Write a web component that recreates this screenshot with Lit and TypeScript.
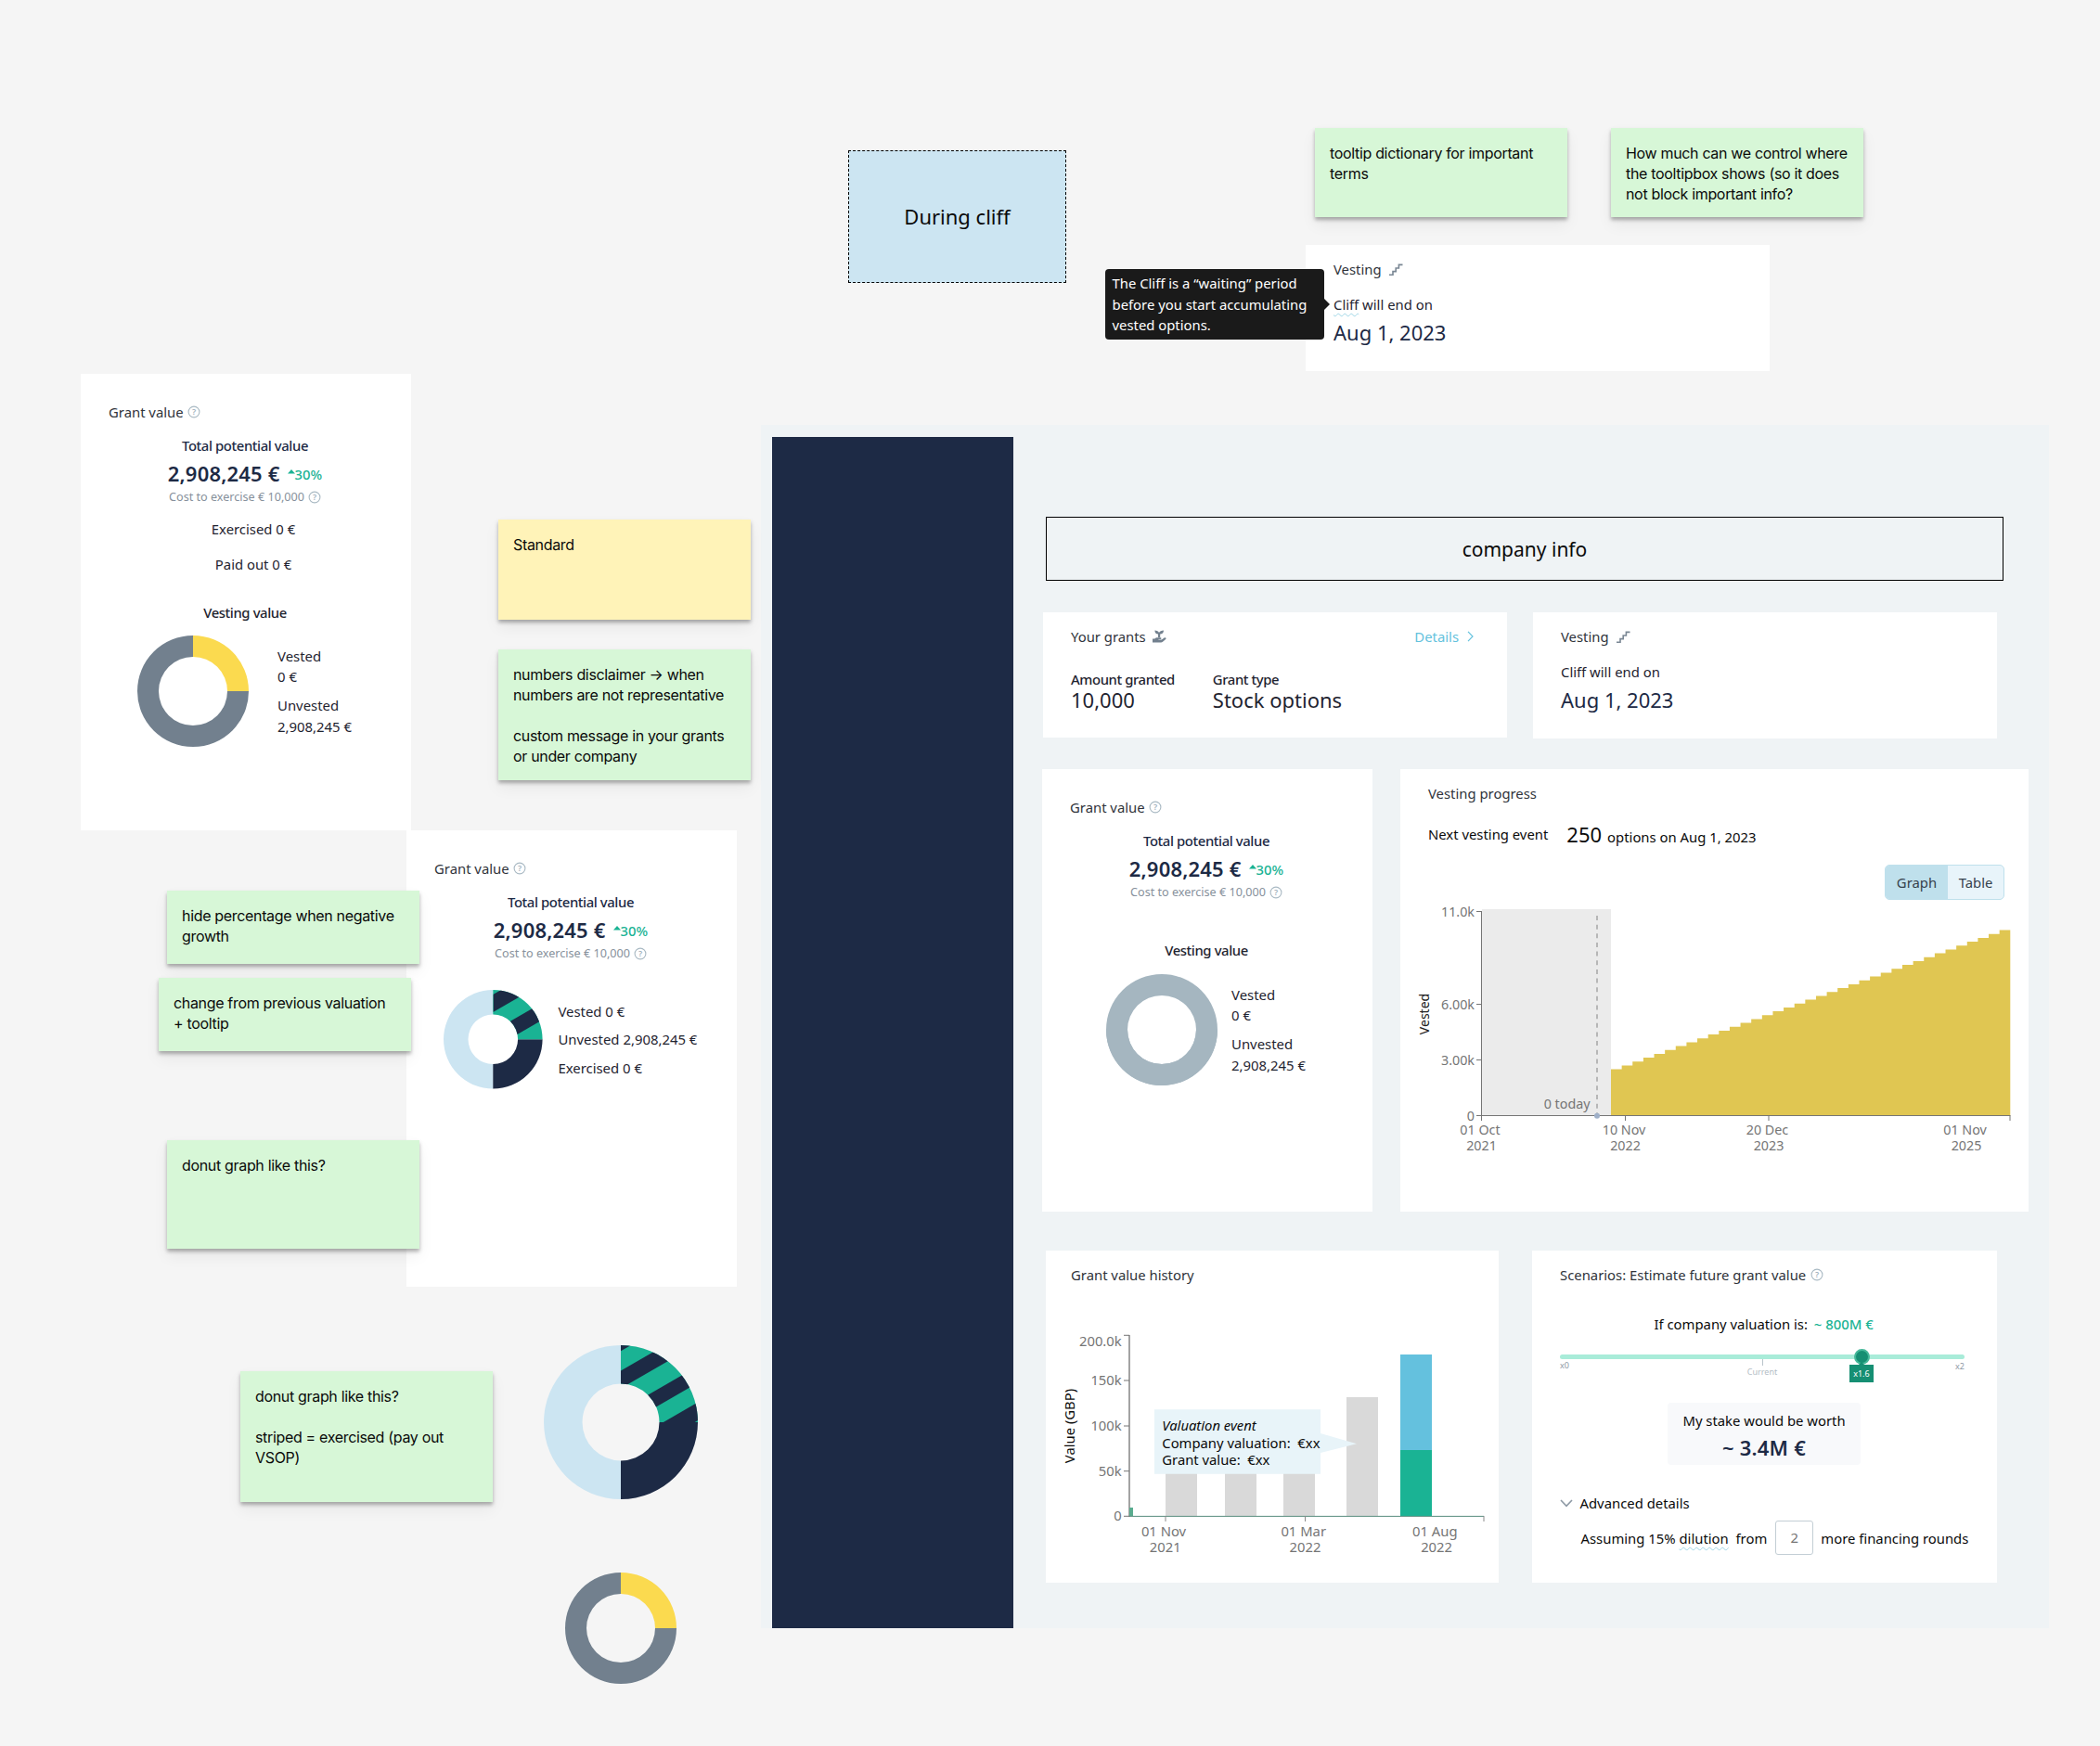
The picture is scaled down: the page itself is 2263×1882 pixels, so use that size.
import { css, html, LitElement, nothing, svg } from "lit";
import { customElement, property } from "lit/decorators.js";
import { styleMap } from "lit/directives/style-map.js";

const text = css`
  * {
    box-sizing: border-box;
  }

  .line {
    font-size: 14.85px;
    line-height: 20px;
    white-space: pre;
  }

  .big {
    font-size: 22px;
    line-height: 30px;
    white-space: pre;
  }

  .medium {
    font-weight: 500;
    letter-spacing: -0.4px;
  }

  .term {
    text-decoration: underline wavy #9fd6e6 0.6px;
    text-underline-offset: 3px;
  }

  svg {
    display: block;
    flex: none;
    overflow: visible;
  }
`;

@customElement("help-icon")
export class HelpIcon extends LitElement {
  render() {
    return html`
      <svg width="14" height="14" viewBox="0 0 14 14">
        <circle cx="7" cy="7" r="5.9" fill="none" stroke="#a9b9c3" stroke-width="1.1" />
        <text x="7" y="10.3" text-anchor="middle">?</text>
      </svg>
    `;
  }

  static styles = css`
    :host {
      display: block;
      flex: none;
      height: 14px;
      letter-spacing: 0;
      white-space: normal;
    }

    svg {
      display: block;
    }

    text {
      font: 600 9px "Noto Sans", sans-serif;
      fill: #9fb1bc;
    }
  `;
}

@customElement("sticky-note")
export class StickyNote extends LitElement {
  @property() text = "";

  render() {
    return html`<p>${this.text}</p>`;
  }

  static styles = css`
    :host {
      display: block;
      box-sizing: border-box;
      width: 272px;
      padding: 16px;
      background: #d7f7d7;
      box-shadow: 0 3px 4px rgba(0, 0, 0, 0.3), 0 8px 16px rgba(0, 0, 0, 0.06);
    }

    :host([yellow]) {
      background: #fff3b8;
    }

    p {
      margin: 0;
      color: #0a0a0a;
      font-family: Inter, sans-serif;
      font-size: 16px;
      line-height: 22px;
      letter-spacing: -0.33px;
      white-space: pre;
    }
  `;
}

type Slice = { from: number; to: number; color: string };

@customElement("donut-chart")
export class DonutChart extends LitElement {
  @property({ type: Number }) radius = 60;
  @property({ type: Number }) hole = 37;
  @property({ attribute: false }) slices: Slice[] = [];
  // [top, bottom] of every diagonal band over the first quarter
  @property({ attribute: false }) stripes: number[][] = [];

  private slicePath({ from, to }: Slice) {
    const r = this.radius;
    const h = this.hole;
    const at = (turn: number, d: number) => {
      const a = turn * 2 * Math.PI;
      return `${(d * Math.sin(a)).toFixed(3)} ${(-d * Math.cos(a)).toFixed(3)}`;
    };
    const large = to - from > 0.5 ? 1 : 0;
    return `M${at(from, r)}A${r} ${r} 0 ${large} 1 ${at(to, r)}L${at(to, h)}A${h} ${h} 0 ${large} 0 ${at(from, h)}Z`;
  }

  render() {
    const r = this.radius;
    const drop = r * Math.tan(Math.PI / 6);
    return html`
      <svg width=${r * 2} height=${r * 2} viewBox="${-r} ${-r} ${r * 2} ${r * 2}">
        <clipPath id="quarter"><path d=${this.slicePath({ from: 0, to: 0.25, color: "" })} /></clipPath>
        ${this.slices.map((s) => svg`<path d=${this.slicePath(s)} fill=${s.color} />`)}
        <g clip-path="url(#quarter)">
          ${this.stripes.map(
            ([a, b]) => svg`<polygon points="0,${a} ${r},${a - drop} ${r},${b - drop} 0,${b}" fill="#1d2a45" />`
          )}
        </g>
      </svg>
    `;
  }

  static styles = css`
    :host {
      display: block;
      flex: none;
    }

    svg {
      display: block;
    }
  `;
}

const quarterDonut: Slice[] = [
  { from: 0.25, to: 1, color: "#72808e" },
  { from: 0, to: 0.25, color: "#fbda4f" },
];
const plainDonut: Slice[] = [
  { from: 0, to: 0.5, color: "#a5b6c0" },
  { from: 0.5, to: 1, color: "#a5b6c0" },
  { from: 0.25, to: 0.75, color: "#a5b6c0" },
];
const stripedDonut: Slice[] = [
  { from: 0.5, to: 1, color: "#cce5f2" },
  { from: 0.25, to: 0.5, color: "#1d2a45" },
  { from: 0, to: 0.25, color: "#1ab394" },
];

@customElement("grant-value-card")
export class GrantValueCard extends LitElement {
  @property() variant: "payout" | "striped" | "vesting" = "vesting";

  private renderPairs() {
    return html`
      <div class="legend pairs">
        <div>Vested<br />0 €</div>
        <div>Unvested<br />2,908,245 €</div>
      </div>
    `;
  }

  private renderBody() {
    if (this.variant === "striped") {
      return html`
        <div class="chart striped">
          <donut-chart
            .radius=${53.3}
            .hole=${26.8}
            .slices=${stripedDonut}
            .stripes=${[[-48.3, -29.3], [-8.9, 9.8]]}
          ></donut-chart>
          <div class="legend rows">
            <div>Vested 0 €</div>
            <div>Unvested 2,908,245 €</div>
            <div>Exercised 0 €</div>
          </div>
        </div>
      `;
    }
    const payout = this.variant === "payout";
    return html`
      ${payout
        ? html`
            <div class="line extra exercised">Exercised 0 €</div>
            <div class="line extra paid">Paid out 0 €</div>
          `
        : nothing}
      <div class="line medium center heading ${this.variant}">Vesting value</div>
      <div class="chart ${this.variant}">
        <donut-chart .slices=${payout ? quarterDonut : plainDonut}></donut-chart>
        ${this.renderPairs()}
      </div>
    `;
  }

  render() {
    return html`
      <div class="title line">Grant value<help-icon></help-icon></div>
      <div class="line medium center total">Total potential value</div>
      <div class="amount">
        <span class="big">2,908,245 €</span>
        <svg width="8" height="5" viewBox="0 0 8 5"><path d="M0 4.6 4 0l4 4.6z" fill="#1ab394" /></svg>
        <span class="line growth">30%</span>
      </div>
      <div class="cost">Cost to exercise € 10,000<help-icon></help-icon></div>
      ${this.renderBody()}
    `;
  }

  static styles = [
    text,
    css`
      :host {
        display: block;
        box-sizing: border-box;
        width: 356px;
        padding-top: 31px;
        background: #fff;
        color: #1f2430;
        font-family: "Noto Sans", sans-serif;
      }

      .title {
        display: flex;
        align-items: center;
        gap: 4.5px;
        margin-left: 30px;
        color: #30343b;
      }

      .center {
        padding-right: 2px;
        text-align: center;
      }

      .total {
        margin-top: 16px;
        color: #1d2a45;
      }

      .amount {
        display: flex;
        justify-content: center;
        margin-top: 5px;
        padding-right: 2px;
        color: #1d2a45;
      }

      .amount .big {
        font-weight: 600;
        letter-spacing: 0.2px;
      }

      .amount svg {
        margin: 11px 0 0 8px;
      }

      .growth {
        margin-top: 6px;
        color: #1ab394;
        font-weight: 500;
      }

      .cost {
        display: flex;
        align-items: center;
        justify-content: center;
        gap: 4px;
        margin-top: 2px;
        padding-right: 2px;
        color: #87919c;
        font-size: 12.6px;
        line-height: 18px;
      }

      .extra {
        padding-left: 16px;
        text-align: center;
      }

      .exercised {
        margin-top: 15px;
      }

      .paid {
        margin-top: 18px;
      }

      .heading.payout {
        margin-top: 32px;
      }

      .heading.vesting {
        margin-top: 43px;
      }

      .chart {
        display: flex;
        align-items: center;
        margin-top: 15px;
      }

      .chart.payout {
        gap: 31px;
        margin-left: 61px;
      }

      .chart.vesting {
        gap: 15px;
        margin: 16px 0 0 69px;
      }

      .chart.striped {
        gap: 16.5px;
        margin: 30px 0 0 40.3px;
      }

      .legend {
        font-size: 14.9px;
        white-space: nowrap;
      }

      .pairs {
        display: grid;
        gap: 8px;
        line-height: 22.7px;
      }

      .rows {
        line-height: 30.5px;
      }
    `,
  ];
}

@customElement("vesting-card")
export class VestingCard extends LitElement {
  @property({ type: Boolean }) marked = false;

  render() {
    return html`
      <div class="title line">
        Vesting
        <svg width="15" height="13" viewBox="0 0 15 13">
          <path d="M0 12.2H4V8.6H7.2V5H10.4V1.4H14.5" fill="none" stroke="#7a8794" stroke-width="1.6" />
        </svg>
      </div>
      <div class="line cliff"><span class=${this.marked ? "term" : ""}>Cliff</span> will end on</div>
      <div class="big date">Aug 1, 2023</div>
    `;
  }

  static styles = [
    text,
    css`
      :host {
        display: block;
        box-sizing: border-box;
        width: 500px;
        height: 136px;
        padding: 16px 30px;
        background: #fff;
        color: #1f2430;
        font-family: "Noto Sans", sans-serif;
      }

      .title {
        display: flex;
        align-items: center;
        gap: 8px;
        color: #30343b;
        white-space: normal;
      }

      .cliff {
        margin-top: 18px;
      }

      .date {
        margin-top: 5px;
        color: #1d2a45;
      }
    `,
  ];
}

@customElement("vesting-progress")
export class VestingProgress extends LitElement {
  // The cliff releases 2500 options, then 36 monthly events lead to 10000
  private renderSteps() {
    const step = (657.3 - 227) / 37;
    let d = "M227 373.6";
    for (let i = 0; i < 37; i++) {
      const y = 373.6 - (2500 + (i * 7500) / 36) * 0.02;
      d += `V${y.toFixed(2)}H${(227 + (i + 1) * step).toFixed(2)}`;
    }
    return svg`<path d="${d}V373.6Z" fill="#e0c652" />`;
  }

  render() {
    const yTicks = [[153.5, "11.0k"], [253.5, "6.00k"], [313.5, "3.00k"], [373.5, "0"]] as const;
    const xTicks = [
      [87.5, 86, "01 Oct", "2021"],
      [242.5, 241, "10 Nov", "2022"],
      [397, 395.5, "20 Dec", "2023"],
      [657, 608.5, "01 Nov", "2025"],
    ] as const;
    return html`
      <div class="line title">Vesting progress</div>
      <div class="next">
        <span class="line">Next vesting event</span>
        <span class="big">250</span>
        <span class="line options">options on Aug 1, 2023</span>
      </div>
      <div class="toggle">
        <div class="line on">Graph</div>
        <div class="line">Table</div>
      </div>
      <svg width="677" height="337" viewBox="0 140 677 337">
        <rect x="88" y="151" width="139" height="222.5" fill="#ebebeb" />
        ${this.renderSteps()}
        <path class="dash" d="M212 158V371" />
        <path class="axis" d="M87.5 153V379M87.5 373.5H657.5" />
        ${yTicks.map(([y, label]) => svg`
          <path class="axis" d="M82 ${y}h5.5" />
          <text x="80" y=${y + 5.3} text-anchor="end">${label}</text>
        `)}
        ${xTicks.map(([x, center, day, year]) => svg`
          <path class="axis" d="M${x} 373.5v5.5" />
          <text x=${center} y="394.3" text-anchor="middle">${day}</text>
          <text x=${center + 1.5} y="411.3" text-anchor="middle">${year}</text>
        `)}
        <circle cx="212" cy="373.8" r="3" fill="#9fb0c9" />
        <text x="204.5" y="366" text-anchor="end">0 today</text>
        <text class="name" transform="translate(30.5 264) rotate(-90)" text-anchor="middle">Vested</text>
      </svg>
    `;
  }

  static styles = [
    text,
    css`
      :host {
        display: block;
        box-sizing: border-box;
        width: 677px;
        height: 477px;
        padding-top: 16px;
        background: #fff;
        font-family: "Noto Sans", sans-serif;
      }

      .title {
        margin-left: 30px;
        color: #30343b;
      }

      .next {
        display: flex;
        height: 30px;
        margin: 19px 0 0 30px;
        color: #0a0a0a;
      }

      .next .line {
        margin-top: 5px;
      }

      .next .big {
        margin-left: 20px;
      }

      .next .options {
        margin: 8px 0 0 6px;
      }

      .toggle {
        display: flex;
        width: 129px;
        height: 38px;
        margin: 18px 0 0 522px;
        overflow: hidden;
        border: 1px solid #bfe0ec;
        border-radius: 5px;
        background: #e8f4fa;
        color: #36424d;
      }

      .toggle .line {
        flex: 1;
        padding-top: 7.5px;
        text-align: center;
      }

      .toggle .on {
        flex: 0 0 67px;
        background: #bfe0ec;
      }

      svg {
        margin-top: -1px;
      }

      .axis {
        fill: none;
        stroke: #757575;
      }

      .dash {
        stroke: #9a9a9a;
        stroke-width: 1.3;
        stroke-dasharray: 5 4.65;
      }

      text {
        fill: #757575;
        font-size: 14.3px;
      }

      .name {
        fill: #222;
        font-size: 14px;
      }
    `,
  ];
}

@customElement("value-history")
export class ValueHistory extends LitElement {
  render() {
    const yTicks = [
      [91.3, 103, "200.0k"],
      [140, 145.3, "150k"],
      [189, 194, "100k"],
      [237.7, 242.7, "50k"],
      [286.3, 291.3, "0"],
    ] as const;
    const xTicks = [
      [129, 127, "01 Nov", "2021"],
      [279.5, 277.7, "01 Mar", "2022"],
      [472, 419.3, "01 Aug", "2022"],
    ] as const;
    const bars = [
      [129, 230],
      [193, 220],
      [256, 210],
      [324, 158],
    ];
    return html`
      <div class="line title">Grant value history</div>
      <svg width="488" height="322" viewBox="0 36 488 322">
        ${bars.map(([x, y]) => svg`<rect x=${x} y=${y} width="34" height=${286 - y} fill="#d9d9d9" />`)}
        <rect x="382" y="112" width="34" height="103" fill="#64c1de" />
        <rect x="382" y="215" width="34" height="71" fill="#1ab394" />
        <path d="M90 91V287" stroke="#a3a3a3" stroke-width="2" />
        <rect x="90" y="277" width="4" height="9" fill="#5aac8f" />
        <path d="M90 286.4H472" stroke="#588c7e" />
        ${yTicks.map(([y, base, label]) => svg`
          <path d="M84 ${y}h6" stroke="#757575" />
          <text x="81.7" y=${base} text-anchor="end">${label}</text>
        `)}
        ${xTicks.map(([x, center, day, year]) => svg`
          <path d="M${x} 286v6" stroke="#8a8a8a" />
          <text x=${center} y="307.7" text-anchor="middle">${day}</text>
          <text x=${center + 1.8} y="325.3" text-anchor="middle">${year}</text>
        `)}
        <path d="M117 171.3H296V197L335 208.3L296 218V240.7H117Z" fill="#e8f4f9" />
        <text class="dark italic" x="125.3" y="194">Valuation event</text>
        <text class="dark" x="125.3" y="213.2">Company valuation:  €xx</text>
        <text class="dark" x="125.3" y="231.2">Grant value:  €xx</text>
        <text class="dark" transform="translate(30.5 189) rotate(-90)" text-anchor="middle">Value (GBP)</text>
      </svg>
    `;
  }

  static styles = [
    text,
    css`
      :host {
        display: block;
        box-sizing: border-box;
        width: 488px;
        height: 358px;
        padding-top: 16px;
        background: #fff;
        font-family: "Noto Sans", sans-serif;
      }

      .title {
        margin-left: 27px;
        color: #30343b;
      }

      text {
        fill: #757575;
        font-size: 14.8px;
        white-space: pre;
      }

      .dark {
        fill: #0a0a0a;
      }

      .italic {
        font-style: italic;
      }
    `,
  ];
}

@customElement("value-scenarios")
export class ValueScenarios extends LitElement {
  @property({ type: Number }) factor = 1.6;

  render() {
    return html`
      <div class="line title">Scenarios: Estimate future grant value<help-icon></help-icon></div>
      <div class="line valuation">If company valuation is:<span class="green">~ 800M €</span></div>
      <div class="slider">
        <div class="thumb" style=${styleMap({ left: `${(this.factor / 2) * 93.3}%` })}>
          <div class="badge">x${this.factor}</div>
        </div>
      </div>
      <div class="scale"><span>x0</span><span class="current">Current</span><span class="end">x2</span></div>
      <div class="stake">
        <div class="line">My stake would be worth</div>
        <div class="big">~ 3.4M €</div>
      </div>
      <div class="line advanced">
        <svg width="14" height="9" viewBox="0 0 14 9">
          <path d="M1 1l6 6.3L13 1" fill="none" stroke="#8d99a5" stroke-width="1.6" />
        </svg>
        Advanced details
      </div>
      <div class="line rounds">
        <span>Assuming 15% <span class="term">dilution</span>  from</span>
        <span class="count">2</span>
        <span>more financing rounds</span>
      </div>
    `;
  }

  static styles = [
    text,
    css`
      :host {
        display: block;
        box-sizing: border-box;
        width: 501px;
        height: 358px;
        padding: 16px 30px;
        background: #fff;
        color: #0a0a0a;
        font-family: "Noto Sans", sans-serif;
      }

      .title {
        display: flex;
        align-items: center;
        gap: 4.5px;
        color: #30343b;
      }

      .valuation {
        display: flex;
        gap: 7px;
        margin: 33px 0 0 101.5px;
      }

      .green {
        color: #1ab394;
        font-weight: 500;
      }

      .slider {
        position: relative;
        width: 436px;
        height: 5px;
        margin-top: 23px;
        border-radius: 3px;
        background: #a9ecd9;
      }

      .thumb {
        position: absolute;
        top: -6px;
        width: 17px;
        height: 17px;
        margin-left: -8.5px;
        border: 2.5px solid #45b899;
        border-radius: 50%;
        background: #168f73;
      }

      .badge {
        position: absolute;
        top: 15px;
        left: -7px;
        width: 26px;
        height: 19px;
        background: #168f73;
        color: #fff;
        font-size: 9px;
        line-height: 19px;
        text-align: center;
      }

      .badge::before {
        content: "";
        position: absolute;
        top: -3px;
        left: 10px;
        border: 3px solid transparent;
        border-top: 0;
        border-bottom-color: #168f73;
      }

      .scale {
        display: flex;
        justify-content: space-between;
        width: 436px;
        height: 20px;
        color: #8d99a5;
        font-size: 9px;
        line-height: 13px;
      }

      .scale .end {
        padding-top: 1px;
      }

      .current {
        color: #b3bdc5;
      }

      .current::before {
        content: "";
        display: block;
        width: 1px;
        height: 7px;
        margin: 0 auto;
        background: #b9c4cb;
      }

      .stake {
        width: 208px;
        height: 67px;
        margin: 27px 0 0 116px;
        padding-top: 9px;
        border-radius: 4px;
        background: #f8f9fb;
        text-align: center;
      }

      .stake .big {
        margin-top: 4px;
        color: #1d2a45;
        font-weight: 600;
        letter-spacing: 0.2px;
      }

      .advanced {
        display: flex;
        align-items: center;
        gap: 7.5px;
        margin-top: 31px;
        white-space: normal;
      }

      .rounds {
        display: flex;
        align-items: center;
        margin: 9px 0 0 22.5px;
        white-space: nowrap;
      }

      .rounds > span:first-child {
        white-space: pre;
      }

      .count {
        flex: none;
        width: 41px;
        height: 37px;
        margin: 0 8px 0 9px;
        border: 1px solid #c3ced5;
        border-radius: 3px;
        color: #757575;
        line-height: 35px;
        text-align: center;
      }
    `,
  ];
}

@customElement("grants-board")
export class GrantsBoard extends LitElement {
  render() {
    return html`
      <div class="sidebar"></div>
      <div class="content">
        <div class="company">company info</div>
        <div class="row top">
          <div class="grants">
            <div class="head">
              <span class="line">Your grants</span>
              <svg width="15" height="14" viewBox="0 0 15 14" fill="#72808e">
                <path d="M2.4.4C4.6.4 6.6 1.2 7 3 7.6 1.2 9.6.4 12 .4 12 2.8 10.4 4.4 8.2 4.5V8H6V4.5C3.8 4.4 2.4 2.8 2.4.4Z" />
                <path d="M0 9.5H2.2C3.2 8.5 4.2 8.2 5.2 8.2H8.6C9.8 8.2 9.8 9.9 8.6 9.9H6.4V10.4H9.8L12.6 8.4C14 7.6 15.2 9 14.2 10L11 12.8C10.4 13.3 10 13.4 9.2 13.4H0Z" />
              </svg>
              <a class="line">Details</a>
              <svg class="chevron" width="7" height="12" viewBox="0 0 7 12">
                <path d="M1 .8l5 5.2-5 5.2" fill="none" stroke="#64c2dd" stroke-width="1.2" />
              </svg>
            </div>
            <dl>
              <div>
                <dt class="line medium">Amount granted</dt>
                <dd class="big">10,000</dd>
              </div>
              <div>
                <dt class="line medium">Grant type</dt>
                <dd class="big">Stock options</dd>
              </div>
            </dl>
          </div>
          <vesting-card></vesting-card>
        </div>
        <div class="row middle">
          <grant-value-card></grant-value-card>
          <vesting-progress></vesting-progress>
        </div>
        <div class="row bottom">
          <value-history></value-history>
          <value-scenarios></value-scenarios>
        </div>
      </div>
    `;
  }

  static styles = [
    text,
    css`
      :host {
        display: flex;
        box-sizing: border-box;
        width: 1388px;
        height: 1297px;
        padding: 13px 0 0 12px;
        background: #eff3f5;
        font-family: "Noto Sans", sans-serif;
      }

      .sidebar {
        flex: none;
        width: 260px;
        background: #1d2a45;
      }

      .content {
        margin-left: 31px;
      }

      .company {
        width: 1032px;
        height: 69px;
        margin: 86px 0 0 4px;
        border: 1px solid #000;
        color: #0a0a0a;
        font-size: 21px;
        line-height: 68px;
        text-align: center;
      }

      .row {
        display: flex;
      }

      .top {
        gap: 28px;
        margin: 34px 0 0 1px;
      }

      .middle {
        gap: 30px;
        margin-top: 33px;
      }

      .bottom {
        gap: 36px;
        margin: 42px 0 0 4px;
      }

      .grants {
        width: 500px;
        height: 135px;
        padding: 16px 36px 0 30px;
        background: #fff;
        color: #1f2430;
      }

      .head {
        display: flex;
        align-items: center;
        gap: 7px;
        color: #30343b;
      }

      a {
        margin-left: auto;
        color: #64c2dd;
      }

      .chevron {
        margin-left: 2px;
      }

      dl {
        display: flex;
        gap: 41px;
        margin: 26px 0 0;
      }

      dd {
        margin: -3px 0 0;
      }
    `,
  ];
}

@customElement("app-root")
export class AppRoot extends LitElement {
  render() {
    return html`
      <div class="stage">During cliff</div>
      <sticky-note class="dictionary" text=${"tooltip dictionary for important\nterms"}></sticky-note>
      <sticky-note
        class="control"
        text=${"How much can we control where\nthe tooltipbox shows (so it does\nnot block important info?"}
      ></sticky-note>
      <vesting-card marked></vesting-card>
      <div class="tooltip">The Cliff is a “waiting” period<br />before you start accumulating<br />vested options.</div>

      <grant-value-card class="payout" variant="payout"></grant-value-card>
      <grant-value-card class="striped" variant="striped"></grant-value-card>
      <grants-board></grants-board>

      <sticky-note class="standard" yellow text="Standard"></sticky-note>
      <sticky-note
        class="disclaimer"
        text=${"numbers disclaimer → when\nnumbers are not representative\n\ncustom message in your grants\nor under company"}
      ></sticky-note>
      <sticky-note class="negative" text=${"hide percentage when negative\ngrowth"}></sticky-note>
      <sticky-note class="change" text=${"change from previous valuation\n+ tooltip"}></sticky-note>
      <sticky-note class="donut" text="donut graph like this?"></sticky-note>
      <sticky-note
        class="exercised"
        text=${"donut graph like this?\n\nstriped = exercised (pay out\nVSOP)"}
      ></sticky-note>

      <donut-chart
        class="large"
        .radius=${83}
        .hole=${41.5}
        .slices=${stripedDonut}
        .stripes=${[[-120, -76.7], [-55.5, -36.5], [-12.6, 5.5], [26.5, 46]]}
      ></donut-chart>
      <donut-chart class="small" .slices=${quarterDonut}></donut-chart>
    `;
  }

  static styles = css`
    :host {
      display: block;
      position: relative;
      width: 2263px;
      height: 1882px;
      overflow: hidden;
      background: #f5f5f5;
      font-family: "Noto Sans", sans-serif;
    }

    /* Everything on the canvas is placed freely */
    .stage,
    .tooltip,
    sticky-note,
    vesting-card,
    grant-value-card,
    grants-board,
    .large,
    .small {
      position: absolute;
    }

    .stage {
      left: 914px;
      top: 162px;
      box-sizing: border-box;
      width: 235px;
      height: 143px;
      border: 1px dashed #000;
      background: #cce5f2;
      color: #0a0a0a;
      font-size: 22px;
      line-height: 141px;
      text-align: center;
    }

    .dictionary {
      left: 1417px;
      top: 138px;
      height: 96px;
    }

    .control {
      left: 1736px;
      top: 138px;
      height: 96px;
    }

    vesting-card {
      left: 1407px;
      top: 264px;
    }

    .tooltip {
      left: 1191px;
      top: 290px;
      box-sizing: border-box;
      width: 236px;
      height: 76px;
      padding: 4px 7.5px;
      border-radius: 4px;
      background: #1a1a1a;
      color: #fff;
      font-size: 14.85px;
      line-height: 22.6px;
      white-space: nowrap;
    }

    .tooltip::after {
      content: "";
      position: absolute;
      left: 100%;
      top: 32px;
      border: 6px solid transparent;
      border-right: 0;
      border-left-color: #1a1a1a;
    }

    .payout {
      left: 87px;
      top: 403px;
      height: 492px;
    }

    .striped {
      left: 438px;
      top: 895px;
      height: 492px;
    }

    grants-board {
      left: 820px;
      top: 458px;
    }

    .standard {
      left: 537px;
      top: 560px;
      height: 108px;
    }

    .disclaimer {
      left: 537px;
      top: 700px;
      height: 141px;
    }

    .negative {
      left: 180px;
      top: 960px;
      height: 79px;
    }

    .change {
      left: 171px;
      top: 1054px;
      height: 79px;
    }

    .donut {
      left: 180px;
      top: 1229px;
      height: 117px;
    }

    .exercised {
      left: 259px;
      top: 1478px;
      height: 141px;
    }

    .large {
      left: 586px;
      top: 1450px;
    }

    .small {
      left: 609px;
      top: 1695px;
    }
  `;
}
